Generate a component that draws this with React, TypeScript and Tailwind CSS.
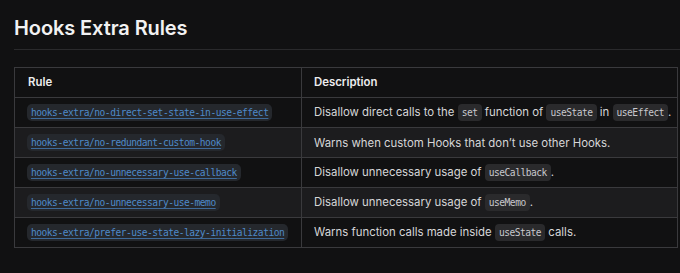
const rules = [
  {
    name: "hooks-extra/no-direct-set-state-in-use-effect",
    desc: (
      <>
        Disallow direct calls to the <Code>set</Code> function of <Code>useState</Code> in{" "}
        <Code>useEffect</Code>.
      </>
    ),
  },
  {
    name: "hooks-extra/no-redundant-custom-hook",
    desc: <>Warns when custom Hooks that don’t use other Hooks.</>,
  },
  {
    name: "hooks-extra/no-unnecessary-use-callback",
    desc: (
      <>
        Disallow unnecessary usage of <Code>useCallback</Code>.
      </>
    ),
  },
  {
    name: "hooks-extra/no-unnecessary-use-memo",
    desc: (
      <>
        Disallow unnecessary usage of <Code>useMemo</Code>.
      </>
    ),
  },
  {
    name: "hooks-extra/prefer-use-state-lazy-initialization",
    desc: (
      <>
        Warns function calls made inside <Code>useState</Code> calls.
      </>
    ),
  },
];

function Code({ children }: { children: React.ReactNode }) {
  return (
    <code className="rounded-[4px] bg-[#2a2a2c] px-[4px] py-[3px] font-['DejaVu_Sans_Mono',monospace] text-[9.6px] tracking-[-0.5px] text-[#c8c8cc]">
      {children}
    </code>
  );
}

export default function App() {
  return (
    <div className="min-h-[273px] w-[680px] overflow-hidden bg-[#111112] pl-[14px] pt-[15px] font-['Inter',sans-serif]">
      <h2 className="border-b border-[#2a2a2c] pb-[8px] text-[20px] font-semibold leading-[26px] tracking-[-0.1px] text-[#f2f2f2]">
        Hooks Extra Rules
      </h2>
      <table className="mt-[17px] w-[664px] table-fixed border-collapse text-[11.4px] text-[#d6d6d8]">
        <thead>
          <tr className="h-[30px]">
            <th className="w-[287px] border border-[#3a3a3d] px-[13px] text-left font-semibold text-[#ececee]">
              Rule
            </th>
            <th className="border border-[#3a3a3d] px-[12px] text-left font-semibold text-[#ececee]">
              Description
            </th>
          </tr>
        </thead>
        <tbody>
          {rules.map((r, i) => (
            <tr key={r.name} className={i % 2 === 1 ? "h-[30px] bg-[#1c1c1e]" : "h-[30px] bg-[#111112]"}>
              <td className="whitespace-nowrap border border-[#3a3a3d] px-[12px] leading-[16px]">
                <a className="rounded-[5px] bg-[#25282d] px-[4px] py-[3px] font-['DejaVu_Sans_Mono',monospace] text-[9.6px] tracking-[-0.5px] text-[#4f8ac9] underline decoration-[#3f6a99] underline-offset-2">
                  {r.name}
                </a>
              </td>
              <td className="whitespace-nowrap border border-[#3a3a3d] px-[12px] leading-[16px]">{r.desc}</td>
            </tr>
          ))}
        </tbody>
      </table>
    </div>
  );
}
